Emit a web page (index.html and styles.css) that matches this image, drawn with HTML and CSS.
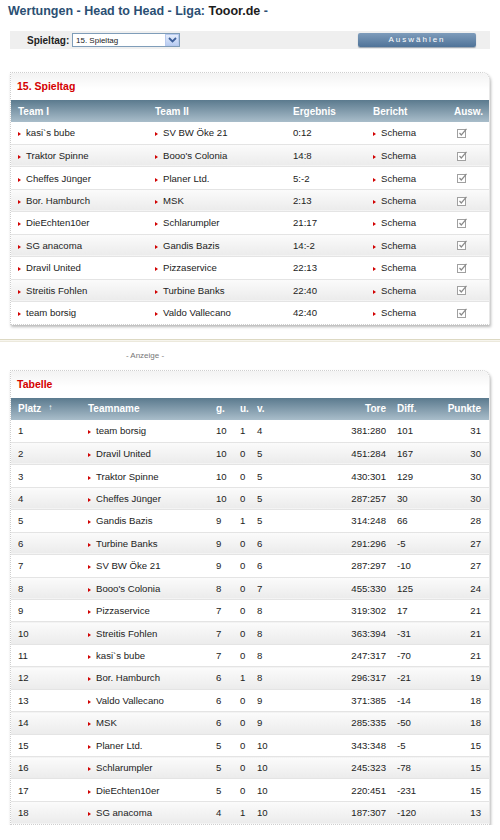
FILE: index.html
```html
<!DOCTYPE html>
<html lang="de">
<head>
<meta charset="utf-8">
<title>Wertungen - Head to Head</title>
<link rel="stylesheet" href="styles.css">
</head>
<body>
<div class="page">
  <h1 class="title"><span class="blue">Wertungen - Head to Head - Liga:</span> Tooor.de <span class="blue">-</span></h1>

  <form class="selectbar">
    <label class="sel-label">Spieltag:</label>
    <div class="select">
      <span class="sel-value">15. Spieltag</span>
      <span class="sel-btn"><svg width="9" height="6" viewBox="0 0 9 6"><path d="M1 1 L4.5 4.5 L8 1" fill="none" stroke="#3d5f9a" stroke-width="1.8"/></svg></span>
    </div>
    <button type="button" class="btn">Auswählen</button>
  </form>

  <div class="card">
    <div class="card-title">15. Spieltag</div>
    <table class="tbl t1">
      <colgroup><col class="c1"><col class="c2"><col class="c3"><col class="c4"><col class="c5"></colgroup>
      <thead>
        <tr><th>Team I</th><th>Team II</th><th>Ergebnis</th><th>Bericht</th><th class="ausw">Ausw.</th></tr>
      </thead>
      <tbody>
        <tr><td><i class="bul"></i>kasi`s bube</td><td><i class="bul"></i>SV BW Öke 21</td><td>0:12</td><td><i class="bul"></i>Schema</td><td class="chk"><svg width="10" height="10" viewBox="0 0 10 10"><rect x="0.5" y="1.5" width="8" height="8" fill="#fff" stroke="#a0a0a0"/><path d="M2.5 5 L4.3 7 L9.5 0.8" fill="none" stroke="#8a8a8a" stroke-width="1.2"/></svg></td></tr>
        <tr><td><i class="bul"></i>Traktor Spinne</td><td><i class="bul"></i>Booo's Colonia</td><td>14:8</td><td><i class="bul"></i>Schema</td><td class="chk"><svg width="10" height="10" viewBox="0 0 10 10"><rect x="0.5" y="1.5" width="8" height="8" fill="#fff" stroke="#a0a0a0"/><path d="M2.5 5 L4.3 7 L9.5 0.8" fill="none" stroke="#8a8a8a" stroke-width="1.2"/></svg></td></tr>
        <tr><td><i class="bul"></i>Cheffes Jünger</td><td><i class="bul"></i>Planer Ltd.</td><td>5:-2</td><td><i class="bul"></i>Schema</td><td class="chk"><svg width="10" height="10" viewBox="0 0 10 10"><rect x="0.5" y="1.5" width="8" height="8" fill="#fff" stroke="#a0a0a0"/><path d="M2.5 5 L4.3 7 L9.5 0.8" fill="none" stroke="#8a8a8a" stroke-width="1.2"/></svg></td></tr>
        <tr><td><i class="bul"></i>Bor. Hamburch</td><td><i class="bul"></i>MSK</td><td>2:13</td><td><i class="bul"></i>Schema</td><td class="chk"><svg width="10" height="10" viewBox="0 0 10 10"><rect x="0.5" y="1.5" width="8" height="8" fill="#fff" stroke="#a0a0a0"/><path d="M2.5 5 L4.3 7 L9.5 0.8" fill="none" stroke="#8a8a8a" stroke-width="1.2"/></svg></td></tr>
        <tr><td><i class="bul"></i>DieEchten10er</td><td><i class="bul"></i>Schlarumpler</td><td>21:17</td><td><i class="bul"></i>Schema</td><td class="chk"><svg width="10" height="10" viewBox="0 0 10 10"><rect x="0.5" y="1.5" width="8" height="8" fill="#fff" stroke="#a0a0a0"/><path d="M2.5 5 L4.3 7 L9.5 0.8" fill="none" stroke="#8a8a8a" stroke-width="1.2"/></svg></td></tr>
        <tr><td><i class="bul"></i>SG anacoma</td><td><i class="bul"></i>Gandis Bazis</td><td>14:-2</td><td><i class="bul"></i>Schema</td><td class="chk"><svg width="10" height="10" viewBox="0 0 10 10"><rect x="0.5" y="1.5" width="8" height="8" fill="#fff" stroke="#a0a0a0"/><path d="M2.5 5 L4.3 7 L9.5 0.8" fill="none" stroke="#8a8a8a" stroke-width="1.2"/></svg></td></tr>
        <tr><td><i class="bul"></i>Dravil United</td><td><i class="bul"></i>Pizzaservice</td><td>22:13</td><td><i class="bul"></i>Schema</td><td class="chk"><svg width="10" height="10" viewBox="0 0 10 10"><rect x="0.5" y="1.5" width="8" height="8" fill="#fff" stroke="#a0a0a0"/><path d="M2.5 5 L4.3 7 L9.5 0.8" fill="none" stroke="#8a8a8a" stroke-width="1.2"/></svg></td></tr>
        <tr><td><i class="bul"></i>Streitis Fohlen</td><td><i class="bul"></i>Turbine Banks</td><td>22:40</td><td><i class="bul"></i>Schema</td><td class="chk"><svg width="10" height="10" viewBox="0 0 10 10"><rect x="0.5" y="1.5" width="8" height="8" fill="#fff" stroke="#a0a0a0"/><path d="M2.5 5 L4.3 7 L9.5 0.8" fill="none" stroke="#8a8a8a" stroke-width="1.2"/></svg></td></tr>
        <tr><td><i class="bul"></i>team borsig</td><td><i class="bul"></i>Valdo Vallecano</td><td>42:40</td><td><i class="bul"></i>Schema</td><td class="chk"><svg width="10" height="10" viewBox="0 0 10 10"><rect x="0.5" y="1.5" width="8" height="8" fill="#fff" stroke="#a0a0a0"/><path d="M2.5 5 L4.3 7 L9.5 0.8" fill="none" stroke="#8a8a8a" stroke-width="1.2"/></svg></td></tr>
      </tbody>
    </table>
  </div>

  <div class="sep"></div>
  <div class="ad">- Anzeige -</div>

  <div class="card">
    <div class="card-title">Tabelle</div>
    <table class="tbl t2">
      <colgroup><col class="d1"><col class="d2"><col class="d3"><col class="d4"><col class="d5"><col class="d6"><col class="d7"><col class="d8"></colgroup>
      <thead>
        <tr><th>Platz <span class="sort">&#8593;</span></th><th>Teamname</th><th>g.</th><th>u.</th><th>v.</th><th class="r tore">Tore</th><th>Diff.</th><th class="r pkt">Punkte</th></tr>
      </thead>
      <tbody>
        <tr><td>1</td><td><i class="bul"></i>team borsig</td><td>10</td><td>1</td><td>4</td><td class="r tore">381:280</td><td>101</td><td class="r pkt">31</td></tr>
        <tr><td>2</td><td><i class="bul"></i>Dravil United</td><td>10</td><td>0</td><td>5</td><td class="r tore">451:284</td><td>167</td><td class="r pkt">30</td></tr>
        <tr><td>3</td><td><i class="bul"></i>Traktor Spinne</td><td>10</td><td>0</td><td>5</td><td class="r tore">430:301</td><td>129</td><td class="r pkt">30</td></tr>
        <tr><td>4</td><td><i class="bul"></i>Cheffes Jünger</td><td>10</td><td>0</td><td>5</td><td class="r tore">287:257</td><td>30</td><td class="r pkt">30</td></tr>
        <tr><td>5</td><td><i class="bul"></i>Gandis Bazis</td><td>9</td><td>1</td><td>5</td><td class="r tore">314:248</td><td>66</td><td class="r pkt">28</td></tr>
        <tr><td>6</td><td><i class="bul"></i>Turbine Banks</td><td>9</td><td>0</td><td>6</td><td class="r tore">291:296</td><td>-5</td><td class="r pkt">27</td></tr>
        <tr><td>7</td><td><i class="bul"></i>SV BW Öke 21</td><td>9</td><td>0</td><td>6</td><td class="r tore">287:297</td><td>-10</td><td class="r pkt">27</td></tr>
        <tr><td>8</td><td><i class="bul"></i>Booo's Colonia</td><td>8</td><td>0</td><td>7</td><td class="r tore">455:330</td><td>125</td><td class="r pkt">24</td></tr>
        <tr><td>9</td><td><i class="bul"></i>Pizzaservice</td><td>7</td><td>0</td><td>8</td><td class="r tore">319:302</td><td>17</td><td class="r pkt">21</td></tr>
        <tr><td>10</td><td><i class="bul"></i>Streitis Fohlen</td><td>7</td><td>0</td><td>8</td><td class="r tore">363:394</td><td>-31</td><td class="r pkt">21</td></tr>
        <tr><td>11</td><td><i class="bul"></i>kasi`s bube</td><td>7</td><td>0</td><td>8</td><td class="r tore">247:317</td><td>-70</td><td class="r pkt">21</td></tr>
        <tr><td>12</td><td><i class="bul"></i>Bor. Hamburch</td><td>6</td><td>1</td><td>8</td><td class="r tore">296:317</td><td>-21</td><td class="r pkt">19</td></tr>
        <tr><td>13</td><td><i class="bul"></i>Valdo Vallecano</td><td>6</td><td>0</td><td>9</td><td class="r tore">371:385</td><td>-14</td><td class="r pkt">18</td></tr>
        <tr><td>14</td><td><i class="bul"></i>MSK</td><td>6</td><td>0</td><td>9</td><td class="r tore">285:335</td><td>-50</td><td class="r pkt">18</td></tr>
        <tr><td>15</td><td><i class="bul"></i>Planer Ltd.</td><td>5</td><td>0</td><td>10</td><td class="r tore">343:348</td><td>-5</td><td class="r pkt">15</td></tr>
        <tr><td>16</td><td><i class="bul"></i>Schlarumpler</td><td>5</td><td>0</td><td>10</td><td class="r tore">245:323</td><td>-78</td><td class="r pkt">15</td></tr>
        <tr><td>17</td><td><i class="bul"></i>DieEchten10er</td><td>5</td><td>0</td><td>10</td><td class="r tore">220:451</td><td>-231</td><td class="r pkt">15</td></tr>
        <tr><td>18</td><td><i class="bul"></i>SG anacoma</td><td>4</td><td>1</td><td>10</td><td class="r tore">187:307</td><td>-120</td><td class="r pkt">13</td></tr>
      </tbody>
    </table>
  </div>
</div>
</body>
</html>
```

FILE: styles.css
```css
* { box-sizing: border-box; }
html, body { margin: 0; padding: 0; background: #fff; }
body {
  font-family: "Liberation Sans", Arial, sans-serif;
  font-size: 9.6px;
  color: #222;
  width: 500px;
}
.page { padding: 4px 0 0 0; }

.title {
  margin: 0;
  padding-left: 8px;
  font-size: 12.5px;
  line-height: 15px;
  font-weight: bold;
  color: #1c1c1c;
}
.title .blue { color: #2b4f73; }

.selectbar {
  margin: 12px 10px 0 10px;
  height: 18px;
  background: #efefef;
  display: flex;
  align-items: center;
  padding-left: 17px;
  padding-right: 14px;
}
.sel-label { font-weight: bold; font-size: 10px; color: #222; width: 45px; }
.select {
  width: 108px;
  height: 14px;
  border: 1px solid #7f9db9;
  background: #fff;
  display: flex;
  align-items: center;
  justify-content: space-between;
  font-size: 8px;
  padding-left: 3px;
}
.sel-btn {
  width: 14px;
  height: 12px;
  background: linear-gradient(#e4ecfb, #b9cdf2);
  border: 1px solid #b7c9ee;
  display: flex;
  align-items: center;
  justify-content: center;
}
.btn {
  margin-left: auto;
  width: 118px;
  height: 14px;
  border: 0;
  border-radius: 2px;
  background: linear-gradient(#7e9cbb, #4f7398);
  color: #fff;
  font-family: "Liberation Sans", Arial, sans-serif;
  font-size: 8px;
  letter-spacing: 2px;
  padding: 0;
  line-height: 14px;
  box-shadow: 0 1px 1px #9aa4ae;
}

.card {
  margin: 23px 10px 0 10px;
  border: 1px dotted #cfcfcf;
  border-top-right-radius: 8px;
  box-shadow: 1px 2px 3px rgba(0, 0, 0, 0.28);
  background: #fff;
  overflow: hidden;
}
.card-title {
  height: 27px;
  line-height: 27px;
  padding-left: 6px;
  color: #d40000;
  font-weight: bold;
  font-size: 10.5px;
  background: linear-gradient(#f3f3f3, #ffffff 60%);
}

.tbl {
  width: 100%;
  border-collapse: collapse;
  table-layout: fixed;
}
.tbl th {
  height: 22px;
  padding: 0 0 0 7px;
  text-align: left;
  color: #fff;
  font-weight: bold;
  font-size: 10px;
  background: linear-gradient(#5b7a8e, #a9bdca);
}
.tbl td {
  height: 22.45px;
  padding: 0 0 0 7px;
  border-top: 1px solid #e4e4e4;
  white-space: nowrap;
}
.tbl tbody tr:nth-child(even) td { background: linear-gradient(#fbfbfb, #ebebeb); }
.tbl tbody tr:first-child td { border-top: 0; }

.bul {
  display: inline-block;
  width: 0;
  height: 0;
  border-left: 3px solid #d10000;
  border-top: 2.5px solid transparent;
  border-bottom: 2.5px solid transparent;
  margin-right: 5px;
  vertical-align: 0;
}

.t1 .c1 { width: 137px; }
.t1 .c2 { width: 138px; }
.t1 .c3 { width: 80px; }
.t1 .c4 { width: 79px; }
.t1 .c5 { width: 44px; }
.t1 th.ausw { padding-left: 0; padding-right: 6px; text-align: right; }
.t1 td.chk { padding-left: 12px; }
.t1 td.chk svg { display: block; }

.t2 .d1 { width: 70px; }
.t2 .d2 { width: 128px; }
.t2 .d3 { width: 24px; }
.t2 .d4 { width: 17px; }
.t2 .d5 { width: 50px; }
.t2 .d6 { width: 90px; }
.t2 .d7 { width: 39px; }
.t2 .d8 { width: 60px; }
.t2 .r { text-align: right; padding-left: 0; }
.t2 .tore { padding-right: 4px; }
.t2 .pkt { padding-right: 8px; }
.sort { font-size: 8px; margin-left: 4px; vertical-align: 2px; }

.sep {
  margin-top: 14px;
  height: 3px;
  border-top: 1px solid #ddd9c3;
  border-bottom: 1px solid #ece9dc;
  background: #f7f5ee;
}
.ad {
  width: 290px;
  text-align: center;
  color: #777;
  font-size: 8px;
  margin-top: 9px;
  line-height: 10px;
}
.ad + .card { margin-top: 9px; }
```
